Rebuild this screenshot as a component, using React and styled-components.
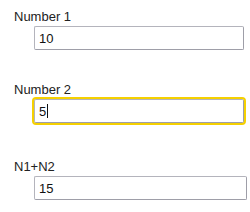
import React from "react";
import styled, { createGlobalStyle } from "styled-components";

const GlobalStyle = createGlobalStyle`
  html, body {
    margin: 0;
    padding: 0;
    background: #ffffff;
  }
  body {
    font-family: "Liberation Sans", Arial, sans-serif;
    color: #222;
  }
`;

export default function App() {
  return (
    <>
      <GlobalStyle />
      <Form>
        <Field $gap={32}>
          <Label>Number 1</Label>
          <Box $width={210}>10</Box>
        </Field>
        <Field $gap={36}>
          <Label>Number 2</Label>
          <Box $width={210} $focused>
            5<Caret />
          </Box>
        </Field>
        <Field>
          <Label>N1+N2</Label>
          <Box $width={213}>15</Box>
        </Field>
      </Form>
    </>
  );
}

const Form = styled.div`
  display: flex;
  flex-direction: column;
  padding: 9px 0 0 14px;
`;

const Field = styled.div`
  display: flex;
  flex-direction: column;
  align-items: flex-start;
  gap: 2px;
  margin-bottom: ${(p) => p.$gap || 0}px;
`;

const Label = styled.div`
  font-size: 13px;
  line-height: 15px;
  color: #222;
`;

const Box = styled.div`
  box-sizing: border-box;
  margin-left: 20px;
  width: ${(p) => p.$width}px;
  height: 24px;
  padding: 0 4px;
  display: flex;
  align-items: center;
  font-size: 13px;
  color: #111;
  background: #fff;
  border: 1px solid #b4b4bc;
  border-right-color: #9e9ea8;
  border-bottom-color: #9e9ea8;
  border-radius: 2px;
  outline: ${(p) => (p.$focused ? "2px solid #f5d000" : "none")};
  outline-offset: 0;
`;

const Caret = styled.span`
  display: inline-block;
  width: 1px;
  height: 14px;
  background: #111;
  margin-left: 1px;
`;
